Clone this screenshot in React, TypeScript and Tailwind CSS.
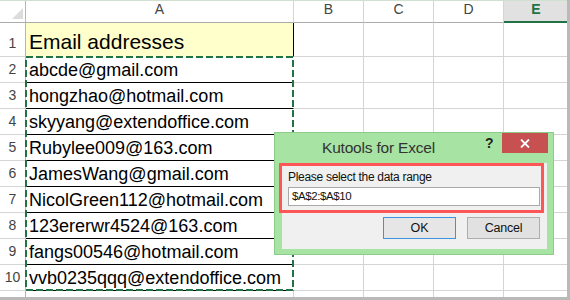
const emails = [
  'abcde@gmail.com',
  'hongzhao@hotmail.com',
  'skyyang@extendoffice.com',
  'Rubylee009@163.com',
  'JamesWang@gmail.com',
  'NicolGreen112@hotmail.com',
  '123ererwr4524@163.com',
  'fangs00546@hotmail.com',
  'vvb0235qqq@extendoffice.com',
];

function EmptyCells() {
  return (
    <>
      <div className="w-[70px] shrink-0 border-r border-b border-[#d4d4d4]" />
      <div className="w-[70px] shrink-0 border-r border-b border-[#d4d4d4]" />
      <div className="w-[70px] shrink-0 border-r border-b border-[#d4d4d4]" />
      <div className="w-[64px] shrink-0 border-r border-b border-[#d4d4d4]" />
    </>
  );
}

function RowNum({ n }: { n: number }) {
  return (
    <div className="w-[26px] shrink-0 flex items-end justify-center pb-[2px] border-r border-b border-r-[#b5b5b5] border-b-[#d4d4d4] text-[14px] text-[#444]">
      {n}
    </div>
  );
}

function Dialog() {
  return (
    <div className="absolute left-[274px] top-[132px] w-[280px] h-[123px] bg-[#a7e3a3] border border-[#8ccb89] flex flex-col">
      <div className="relative h-[30px] shrink-0 pl-[47px] pt-[6px] text-[15.5px] tracking-[-0.2px] text-[#333] leading-[17px]">
        Kutools for Excel
        <span className="absolute left-[210px] top-[2px] text-[14px] font-bold text-[#222]">?</span>
        <div className="absolute right-[5px] top-0 w-[46px] h-[20px] bg-[#c75050] flex items-center justify-center">
          <svg width="10" height="9" viewBox="0 0 10 9">
            <path d="M1 0.5 L9 8.5 M9 0.5 L1 8.5" stroke="#fff" strokeWidth="1.8" />
          </svg>
        </div>
      </div>
      <div className="flex-1 ml-[7px] mr-[6px] mb-[5px] bg-[#f0f0f0] flex flex-col pl-[6px] pt-[7px] text-[#111]">
        <div className="text-[12px] tracking-[-0.3px] leading-[14px]">Please select the data range</div>
        <div className="mt-[3px] w-[252px] h-[19px] bg-white border border-[#a9a9a9] pl-[3px] flex items-center text-[11.5px] tracking-[-0.4px]">
          $A$2:$A$10
        </div>
        <div className="mt-[11px] flex justify-end gap-[11px] pr-[7px]">
          <div className="w-[73px] h-[22px] border border-[#3e93e0] bg-[#e6e6e6] flex items-center justify-center text-[12.5px]">
            OK
          </div>
          <div className="w-[73px] h-[22px] border border-[#adadad] bg-[#e1e1e1] flex items-center justify-center text-[12.5px] tracking-[-0.2px]">
            Cancel
          </div>
        </div>
      </div>
    </div>
  );
}

export default function App() {
  return (
    <div className="w-[570px] h-[300px] bg-[#b9b9b9] overflow-hidden font-['Liberation_Sans',Arial,sans-serif]">
      <div className="relative w-[567px] h-[297px] bg-white overflow-hidden flex flex-col">
        <div className="h-[1px] shrink-0 bg-[#cfe0cf]" />
        {/* column headers */}
        <div className="flex h-[22px] shrink-0 text-[14px] text-[#444]">
          <div className="relative w-[26px] shrink-0 border-r border-b border-r-[#b5b5b5] border-b-[#ababab]">
            <svg className="absolute left-[12px] top-[7px]" width="11" height="11" viewBox="0 0 11 11">
              <polygon points="11,0 11,11 0,11" fill="#dcdcdc" />
            </svg>
          </div>
          <div className="w-[268px] shrink-0 flex items-end justify-center pb-[2px] border-r border-b border-r-[#d4d4d4] border-b-[#ababab]">A</div>
          <div className="w-[70px] shrink-0 flex items-end justify-center pb-[2px] border-r border-b border-r-[#d4d4d4] border-b-[#ababab]">B</div>
          <div className="w-[70px] shrink-0 flex items-end justify-center pb-[2px] border-r border-b border-r-[#d4d4d4] border-b-[#ababab]">C</div>
          <div className="w-[70px] shrink-0 flex items-end justify-center pb-[2px] border-r border-b border-r-[#d4d4d4] border-b-[#ababab]">D</div>
          <div className="w-[64px] shrink-0 flex items-end justify-center pb-[1px] bg-[#e1e1e1] border-b-2 border-b-[#217346] font-bold text-[#217346]">E</div>
        </div>
        {/* row 1 */}
        <div className="flex h-[34px] shrink-0">
          <RowNum n={1} />
          <div className="w-[268px] shrink-0 bg-[#ffffcc] border-r border-b border-r-black border-b-transparent flex items-end pl-[3px] pb-[2px] text-[21px] text-black leading-[24px]">
            Email addresses
          </div>
          <EmptyCells />
        </div>
        {emails.map((email, i) => (
          <div key={email} className="flex h-[26px] shrink-0">
            <RowNum n={i + 2} />
            <div className="w-[268px] shrink-0 border-r border-b border-r-white border-b-black flex items-end pl-[3px] pb-[2px] text-[18px] text-black leading-[20px]">
              {email}
            </div>
            <EmptyCells />
          </div>
        ))}
        <div className="flex flex-1">
          <div className="w-[26px] shrink-0 border-r border-[#b5b5b5]" />
          <div className="w-[268px] shrink-0 border-r border-[#d4d4d4]" />
          <div className="w-[70px] shrink-0 border-r border-[#d4d4d4]" />
          <div className="w-[70px] shrink-0 border-r border-[#d4d4d4]" />
          <div className="w-[70px] shrink-0 border-r border-[#d4d4d4]" />
          <div className="w-[64px] shrink-0 border-r border-[#d4d4d4]" />
        </div>

        {/* marching ants around A2:A10 */}
        <svg className="absolute left-[25px] top-[56px]" width="269" height="235" viewBox="0 0 269 235">
          <rect x="1" y="1" width="267" height="233" fill="none" stroke="#217346" strokeWidth="2" strokeDasharray="7 3" />
        </svg>

        <Dialog />

        {/* red highlight */}
        <div className="absolute left-[279px] top-[163px] w-[265px] h-[50px] border-[3px] border-[#fe5656]" />
      </div>
    </div>
  );
}
